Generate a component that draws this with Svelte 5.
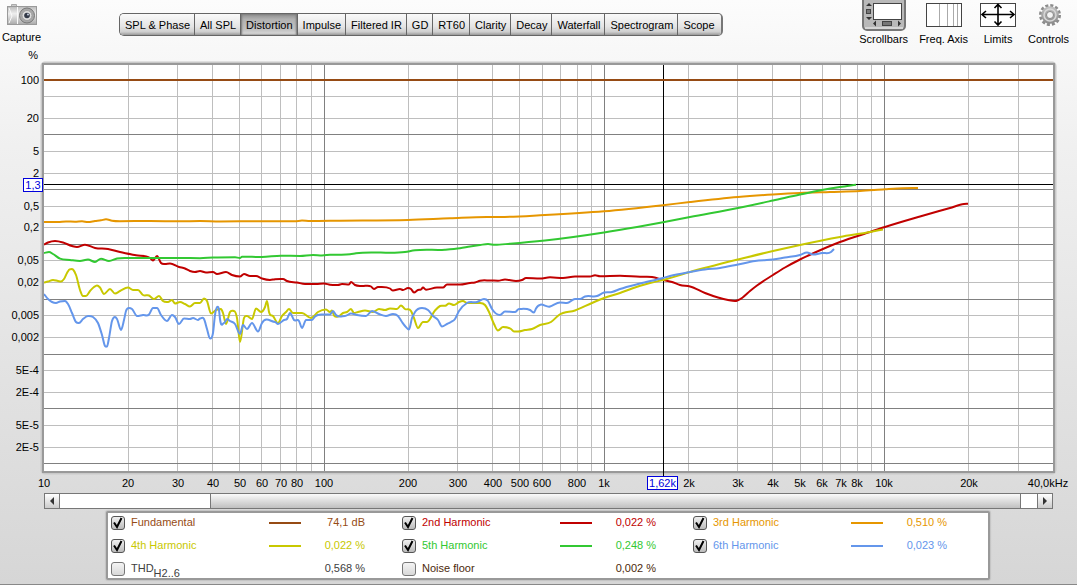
<script lang="ts">
type Point = [number, number];

const tabs = [
	"SPL & Phase", "All SPL", "Distortion", "Impulse", "Filtered IR", "GD",
	"RT60", "Clarity", "Decay", "Waterfall", "Spectrogram", "Scope",
];
let activeTab = $state("Distortion");
let scrollbars = $state(true);

// chart geometry
const left = 44;
const top = 19;
const plotHeight = 406;
const y100 = 34;
const decade = 54.8;

let width = $state(1077);
const plotWidth = $derived(Math.max(width - 68, 100));

const freqPos = (f: number) => left + (Math.log10(f / 10) / Math.log10(4000)) * plotWidth;
const percentPos = (v: number) => y100 + (2 - Math.log10(v)) * decade;
const crisp = (n: number) => Math.floor(n) + 0.5;

const freqLines = [10, 100, 1000, 10000]
	.flatMap((base) => [1, 2, 3, 4, 5, 6, 7, 8, 9].map((m) => ({ f: base * m, major: m === 1 })))
	.filter((l) => l.f > 10 && l.f < 40000);

const percentLines = [1, 0, -1, -2, -3, -4, -5]
	.flatMap((e) => [1, 2, 5].map((m) => ({ v: m * 10 ** e, major: m === 1 })));

const freqLabels = [
	{ f: 10, text: "10" }, { f: 20, text: "20" }, { f: 30, text: "30" }, { f: 40, text: "40" },
	{ f: 50, text: "50" }, { f: 60, text: "60" }, { f: 70, text: "70" }, { f: 80, text: "80" },
	{ f: 100, text: "100" }, { f: 200, text: "200" }, { f: 300, text: "300" }, { f: 400, text: "400" },
	{ f: 500, text: "500" }, { f: 600, text: "600" }, { f: 800, text: "800" }, { f: 1000, text: "1k" },
	{ f: 2000, text: "2k" }, { f: 3000, text: "3k" }, { f: 4000, text: "4k" }, { f: 5000, text: "5k" },
	{ f: 6000, text: "6k" }, { f: 7000, text: "7k" }, { f: 8000, text: "8k" }, { f: 10000, text: "10k" },
	{ f: 20000, text: "20k" }, { f: 38500, text: "40,0kHz" },
];

const percentLabels = [
	{ v: 100, text: "100" }, { v: 20, text: "20" }, { v: 5, text: "5" }, { v: 2, text: "2" },
	{ v: 0.5, text: "0,5" }, { v: 0.2, text: "0,2" }, { v: 0.05, text: "0,05" }, { v: 0.02, text: "0,02" },
	{ v: 0.005, text: "0,005" }, { v: 0.002, text: "0,002" }, { v: 5e-4, text: "5E-4" },
	{ v: 2e-4, text: "2E-4" }, { v: 5e-5, text: "5E-5" }, { v: 2e-5, text: "2E-5" },
];

const cursorX = $derived(crisp(freqPos(1625)));
const cursorY = 138.5;

// x runs over 44..1053, y over 65..471
const curves: Record<string, Point[]> = {
	third: [[44,222],[58,222],[66,221.5],[75,221.7],[82,221.3],[88,222],[95,221],[101,220.3],[106,219.3],[112,220.7],[120,221.2],[150,221],[180,221.3],[200,221],[220,221.5],[260,221.2],[295,221.3],[302,220.5],[310,221],[340,220.7],[408,220],[450,218.3],[487,217],[500,217],[545,215],[604,211.3],[663,205.2],[690,202],[738,197],[773,194.5],[800,193],[830,192],[860,191],[885,189.3],[903,188.3],[918,188]],
	fifth: [[44,253],[49,252],[53,254],[60,258.7],[70,260],[80,261],[88,259.5],[95,262],[101,258.7],[109,261],[117,258.5],[130,258],[150,258],[180,258],[200,258.2],[213,257.5],[235,257.2],[240,258],[242,256.7],[262,257],[281,255.7],[300,256],[313,255],[322,255.5],[330,254.8],[350,254.3],[356,253.3],[405,252],[415,250.3],[445,249.7],[460,248.3],[470,246.5],[480,245],[488,244],[495,244.8],[510,243.7],[545,240.5],[604,232.5],[637,227],[663,222.3],[690,217],[738,208],[773,200.5],[800,194.5],[822,190],[840,187],[856,184.7]],
	second: [[44,244.5],[48,242.5],[55,241],[63,242.5],[72,246],[77,247],[85,244.7],[95,248],[108,249],[120,252],[136,255.3],[150,258],[153,260.5],[157,256],[161,263],[165,264],[170,263.5],[179,267],[185,268.5],[190,271],[195,272],[200,271],[206,272.5],[213,272],[217,274],[226,272],[232,275],[240,276.5],[244,274],[250,276],[256,276],[262,278.5],[270,280],[275,279.2],[283,279],[287,281],[297,282.5],[305,284],[316,284],[324,283.5],[330,284.7],[338,285],[342,284],[349,284.5],[351,282],[355,285],[362,286],[371,286.5],[374,289],[378,287],[390,288.5],[393,290.5],[400,289],[403,290],[408,288],[411,289],[414,292.5],[418,290],[421,289.5],[423,287.5],[426,289.7],[437,287.5],[443,287.5],[447,284.5],[460,284.5],[470,283],[475,282.5],[480,280.7],[490,280.5],[498,280.7],[505,279.5],[516,281],[522,280],[526,278],[540,278.5],[550,277.3],[563,278],[575,276.5],[590,276.5],[595,275.3],[600,276.3],[620,275.7],[640,276.8],[652,277],[663,280],[672,282],[680,285],[690,286.5],[705,293],[718,297.5],[728,300],[735,301],[742,298],[750,291],[757,285.5],[773,275],[785,267.5],[800,259.5],[815,252.5],[840,242],[870,232],[885,227],[920,216.5],[950,208],[964,204],[968,203.8]],
	fourth: [[44,282.5],[48,281.5],[53,280],[58,281],[61,281.5],[64,279],[67,273],[70,269.3],[73,269.5],[76,275],[80,290],[83,296],[86,296],[90,291],[94,287],[97,285.5],[100,287.5],[104,294],[110,289],[115,293.5],[120,291],[128,287.5],[133,290],[138,290],[143,295],[149,295.5],[154,299],[159,296],[163,301],[168,302],[172,300],[175,303.5],[180,302],[185,304],[190,306.5],[195,303],[200,303],[204,298.5],[207,301],[211,313.5],[216,310],[221,309],[223,313],[226,324],[230,312],[234,311],[237,318],[240,342],[244,318],[247,316],[252,319],[256,308.5],[261,312],[265,307],[267,301],[269,312],[273,316],[278,323],[282,316],[286,312],[289,309],[293,313],[302,313],[311,318],[318,312],[326,309.5],[330,312],[332,310.5],[334,315.5],[338,316.5],[343,313],[347,312],[351,309],[354,313],[358,312],[365,310.5],[373,312],[379,309],[385,310],[390,308.5],[397,309],[401,305.5],[405,309],[411,311],[414,318],[418,328],[423,322],[427,322],[435,310.5],[440,306],[446,305.5],[449,303.5],[454,305],[459,302],[463,301],[467,303],[480,303],[485,305],[489,312],[494,324],[498,330.5],[503,327],[511,329],[514,331.5],[518,331.5],[525,330],[532,329],[540,325],[551,322],[559,315],[575,310.5],[592,303],[604,298],[620,293],[632,288.5],[650,283],[663,280],[690,272],[738,259.5],[773,251],[800,245],[840,237],[870,232],[883,229.5]],
	sixth: [[44,294],[48,299],[52,302],[56,303],[60,301.5],[65,301],[68,304],[72,313],[76,322],[79,323],[83,319],[88,316],[93,317],[98,323],[102,335],[105,346],[107,346.5],[109,338],[112,321],[115,317],[117,319],[121,330],[124,320],[126,311],[129,308],[132,309],[137,316],[143,315],[149,314.5],[153,308],[157,308],[161,315],[167,321],[172,315],[175,317],[179,324],[184,318.5],[190,319],[193,318],[198,320],[200,318.5],[204,319],[207,329],[210,338.5],[213,333],[215,315],[217,307],[219,310],[220,319],[224,323],[227,319],[230,321],[235,324],[240,334],[243,325],[247,329],[252,323],[258,331.5],[262,323],[275,322],[278,324],[284,320],[287,319],[290,313],[294,320],[299,321],[302,328],[306,320],[312,320],[315,316.5],[324,314.5],[330,314.5],[333,311],[336,315],[345,316],[351,313.5],[357,315],[366,316],[372,311],[379,314],[386,316],[393,314],[398,316],[402,322],[405,326],[409,329.5],[412,318],[415,312],[422,308],[428,310],[433,316],[438,320],[442,326.5],[447,324],[451,322],[455,319],[459,311],[467,303],[477,302],[484,299],[488,301],[492,309],[500,315],[505,311.5],[515,312],[519,309],[530,310],[534,312.5],[536,308.5],[550,306.5],[560,302.5],[567,303],[575,299],[580,299],[585,296.5],[597,296],[604,292.5],[612,292],[620,289],[640,283.5],[663,278],[670,276],[690,272],[705,269.5],[720,268],[738,264.5],[755,261],[773,259.5],[785,257.5],[800,255],[807,252.5],[813,254.5],[822,253],[831,252],[834,249]],
};

function slope(points: Point[], i: number) {
	const seg = (a: Point, b: Point) => (b[1] - a[1]) / (b[0] - a[0]);
	if (i === 0) return seg(points[0], points[1]);
	if (i === points.length - 1) return seg(points[i - 1], points[i]);
	const before = points[i][0] - points[i - 1][0];
	const after = points[i + 1][0] - points[i][0];
	const s0 = seg(points[i - 1], points[i]);
	const s1 = seg(points[i], points[i + 1]);
	// flat at peaks so the curve never overshoots them
	if (s0 * s1 <= 0) return 0;
	return (s0 * after + s1 * before) / (before + after);
}

function smooth(points: Point[]) {
	let d = `M${points[0]}`;
	for (let i = 0; i < points.length - 1; i++) {
		const [x0, y0] = points[i];
		const [x1, y1] = points[i + 1];
		const t = (x1 - x0) / 3;
		d += `C${x0 + t},${y0 + slope(points, i) * t} ${x1 - t},${y1 - slope(points, i + 1) * t} ${x1},${y1}`;
	}
	return d;
}

let traces = $state([
	{ id: "fundamental", name: "Fundamental", sub: "", value: "74,1 dB", color: "#964b14", line: true, on: true },
	{ id: "second", name: "2nd Harmonic", sub: "", value: "0,022 %", color: "#c00000", line: true, on: true },
	{ id: "third", name: "3rd Harmonic", sub: "", value: "0,510 %", color: "#e69600", line: true, on: true },
	{ id: "fourth", name: "4th Harmonic", sub: "", value: "0,022 %", color: "#c8c800", line: true, on: true },
	{ id: "fifth", name: "5th Harmonic", sub: "", value: "0,248 %", color: "#32c832", line: true, on: true },
	{ id: "sixth", name: "6th Harmonic", sub: "", value: "0,023 %", color: "#6496eb", line: true, on: true },
	{ id: "thd", name: "THD", sub: "H2..6", value: "0,568 %", color: "#404040", line: false, on: false },
	{ id: "noise", name: "Noise floor", sub: "", value: "0,002 %", color: "#4b280a", line: false, on: false },
]);
</script>

<div class="page">
	<header>
		<button class="tool capture">
			<svg width="32" height="28" viewBox="0 0 32 28">
				<defs>
					<linearGradient id="body" x1="0" y1="0" x2="0" y2="1">
						<stop offset="0" stop-color="#bbb" />
						<stop offset="0.4" stop-color="#eee" />
						<stop offset="1" stop-color="#aaa" />
					</linearGradient>
				</defs>
				<path d="M5.500 6V4.500h5V6" fill="#ccc" stroke="#aaa" />
				<rect x="1.500" y="6.500" width="29" height="18" fill="url(#body)" stroke="#9a9a9a" />
				<path d="M3 8l3 8-3 7M11.500 7v17" fill="none" stroke="#fafafa" />
				<circle cx="21" cy="15.500" r="7.500" fill="#a8a8a8" stroke="#777" />
				<circle cx="21" cy="15.500" r="5" fill="#ddd" stroke="#a0a0a0" />
				<circle cx="21" cy="15.500" r="2.800" fill="#333a48" />
				<circle cx="22" cy="14.500" r="1" fill="#c8d0e0" />
			</svg>
			<span>Capture</span>
		</button>

		<nav class="tabs">
			{#each tabs as tab}
				<button class:active={tab === activeTab} onclick={() => (activeTab = tab)}>{tab}</button>
			{/each}
		</nav>

		<div class="tools">
			<button class="tool" aria-pressed={scrollbars} onclick={() => (scrollbars = !scrollbars)}>
				<svg width="44" height="31" viewBox="0 0 44 31">
					<rect x="1" y="-3" width="42" height="33" rx="4" fill="#b9b9b9" stroke="#777" stroke-width="2" />
					<path d="M3 28h38" stroke="#d6d6d6" stroke-width="2" />
					<rect x="11.500" y="3.500" width="28" height="16" fill="#fff" stroke="#444" />
					<path d="M4 6l3-3 3 3zM4 17h6l-3 3zM14 20.500v6l-3-3zM36 20.500v6l3-3z" fill="#333" />
					<rect x="4.500" y="9.500" width="4" height="4" fill="#777" stroke="#444" />
					<rect x="20.500" y="21.500" width="9" height="4" fill="#777" stroke="#444" />
				</svg>
				<span>Scrollbars</span>
			</button>
			<button class="tool">
				<svg width="38" height="31" viewBox="0 0 38 31">
					<rect x="1.500" y="3.500" width="35" height="23" fill="#fff" stroke="#444" />
					<path d="M14.500 4v22M22.500 4v22M28.500 4v22M32.500 4v22" stroke="#aaa" />
				</svg>
				<span>Freq. Axis</span>
			</button>
			<button class="tool">
				<svg width="38" height="31" viewBox="0 0 38 31">
					<rect x="1.500" y="3.500" width="35" height="23" fill="#fff" stroke="#444" />
					<path d="M3 14.500h32M19 5v20M7 11l-4 3.500 4 3.500M31 11l4 3.500-4 3.500M15.500 8L19 4.500 22.500 8M15.500 21.500L19 25l3.500-3.500" fill="none" stroke="#000" stroke-width="1.600" />
				</svg>
				<span>Limits</span>
			</button>
			<button class="tool">
				<svg width="26" height="31" viewBox="0 0 26 31">
					<defs>
						<linearGradient id="gear" x1="0" y1="0" x2="0" y2="1">
							<stop offset="0" stop-color="#c4c4c4" />
							<stop offset="1" stop-color="#8a8a8a" />
						</linearGradient>
					</defs>
					<circle cx="14" cy="15" r="9.500" fill="none" stroke="#8c8c8c" stroke-width="3" stroke-dasharray="3 1.974" />
					<circle cx="14" cy="15" r="8.800" fill="url(#gear)" />
					<circle cx="14" cy="15" r="6" fill="none" stroke="#d8d8d8" stroke-width="1.500" />
					<circle cx="14" cy="15" r="3.500" fill="#f4f4f4" stroke="#888" />
				</svg>
				<span>Controls</span>
			</button>
		</div>
	</header>

	<div class="chart" bind:clientWidth={width}>
		<svg {width} height="446">
			<rect x={left - 2} y={top - 2} width={plotWidth + 4} height={plotHeight + 4} rx="3" fill="none" stroke="#c9c9c9" stroke-width="3" />
			<rect x={left - 1} y={top - 1} width={plotWidth + 2} height={plotHeight + 2} fill="#fff" stroke="#999" stroke-width="2" />

			{#each [false, true] as major}
				<g class={major ? "major" : "minor"}>
					{#each freqLines.filter((l) => l.major === major) as l}
						<path d="M{crisp(freqPos(l.f))} {top}v{plotHeight}" />
					{/each}
					{#each percentLines.filter((l) => l.major === major && percentPos(l.v) < top + plotHeight) as l}
						<path d="M{left} {crisp(percentPos(l.v))}h{plotWidth}" />
					{/each}
				</g>
			{/each}

			<path d="M{left} {cursorY}h{plotWidth}M{cursorX} {top}v411" stroke="#000" />

			<svg x={left} y={top} width={plotWidth} height={plotHeight} viewBox="44 65 1009 406" preserveAspectRatio="none">
				{#each traces.filter((t) => t.line && t.on) as t (t.id)}
					<path
						class="trace"
						d={curves[t.id] ? smooth(curves[t.id]) : "M44 80H1053"}
						stroke={t.color}
					/>
				{/each}
			</svg>

			<text x="38" y="13" text-anchor="end">%</text>
			{#each percentLabels as l}
				<text x="39" y={Math.floor(percentPos(l.v)) + 4} text-anchor="end">{l.text}</text>
			{/each}
			{#each freqLabels as l}
				<text x={Math.round(freqPos(l.f))} y="441" text-anchor="middle">{l.text}</text>
			{/each}

			<g class="readout">
				<rect x="23.500" y="132.500" width="19" height="13" />
				<text x="33" y="143" text-anchor="middle">1,3</text>
				<rect x={cursorX - 16} y="430.500" width="30" height="13" />
				<text x={cursorX - 1} y="441" text-anchor="middle">1,62k</text>
			</g>
		</svg>
	</div>

	{#if scrollbars}
		<div class="scrollbar">
			<button aria-label="Scroll left"><svg width="14" height="14"><path d="M9 3v8L5 7z" fill="#333" /></svg></button>
			<div class="track"><div class="thumb"></div></div>
			<button aria-label="Scroll right"><svg width="14" height="14"><path d="M5 3v8l4-4z" fill="#333" /></svg></button>
		</div>
	{/if}

	<div class="legend">
		{#each traces as t (t.id)}
			<div class="entry" style:color={t.color}>
				<input type="checkbox" id={t.id} bind:checked={t.on} />
				<label for={t.id}>{t.name}{#if t.sub}<sub>{t.sub}</sub>{/if}</label>
				<span class="swatch" class:hidden={!t.line}></span>
				<span class="value">{t.value}</span>
			</div>
		{/each}
	</div>
</div>

<style>
	:global(body) {
		background: #d6d6d6;
	}

	.page {
		box-sizing: border-box;
		min-height: 100vh;
		border-bottom: 1px solid #888;
		background: linear-gradient(#fcfcfc, #f0f0f0 25%, #d6d6d6);
		font-family: "Liberation Sans", Arial, sans-serif;
		font-size: 11px;
		color: #000;
	}

	header {
		display: flex;
		align-items: flex-start;
		height: 46px;
		padding-right: 8px;
	}

	button {
		padding: 0;
		border: none;
		background: none;
		font: inherit;
		color: inherit;
	}

	.tool {
		display: flex;
		flex-direction: column;
		align-items: center;
		gap: 2px;
		line-height: 12px;
	}

	.tool svg {
		display: block;
	}

	.capture {
		width: 43px;
		gap: 3px;
	}

	.tools {
		display: flex;
		gap: 11px;
		margin-left: auto;
	}

	.tabs {
		display: flex;
		margin: 13px 0 0 76px;
		border: 1px solid #666;
		border-right: 2px solid #777;
		border-radius: 5px;
		overflow: hidden;
	}

	.tabs button {
		height: 21px;
		padding: 0 4px 0 5px;
		border-right: 1px solid #666;
		background: linear-gradient(#fafafa, #e4e4e4 60%, #cfcfcf 85%, #999);
		white-space: nowrap;
	}

	.tabs button:last-child {
		padding-right: 6px;
		border-right: none;
	}

	.tabs .active {
		background: linear-gradient(#8c8c8c, #b2b2b2 25%, #c2c2c2 75%, #dedede);
		box-shadow: inset 1px 0 2px #777, inset -1px 0 2px #777;
	}

	.chart svg {
		display: block;
	}

	.minor path {
		stroke: #bebebe;
	}

	.major path {
		stroke: #808080;
	}

	.trace {
		fill: none;
		stroke-width: 2;
		stroke-linejoin: round;
		vector-effect: non-scaling-stroke;
	}

	.readout rect {
		fill: #fff;
		stroke: #0000dc;
	}

	.readout text {
		fill: #0000dc;
	}

	.scrollbar {
		display: flex;
		box-sizing: border-box;
		height: 16px;
		margin: 1px 24px 2px 44px;
		border: 1px solid #777;
		background: #fff;
	}

	.scrollbar button {
		width: 14px;
		background: linear-gradient(#fff, #ccc);
	}

	.scrollbar button svg {
		display: block;
	}

	.track {
		flex: 1;
		border: solid #777;
		border-width: 0 1px;
	}

	.thumb {
		box-sizing: border-box;
		width: 83%;
		height: 100%;
		margin-left: 15.4%;
		border: solid #777;
		border-width: 0 1px;
		background: linear-gradient(#fafafa, #c0c0c0);
	}

	.legend {
		display: grid;
		grid-template-columns: repeat(3, 1fr);
		grid-auto-rows: 19px;
		row-gap: 4px;
		margin: 0 87px 0 106px;
		padding-left: 3px;
		padding-right: 4px;
		border: 2px solid #999;
		border-radius: 2px;
		background: #fff;
		box-shadow: 0 0 1px 1px #c4c4c4;
	}

	.entry {
		display: grid;
		grid-template-columns: 14px 144px 32px 64px;
		align-items: center;
		line-height: 17px;
	}

	.entry label {
		padding-left: 6px;
	}

	.entry sub {
		position: relative;
		top: 5px;
		font-size: 11px;
		vertical-align: baseline;
		line-height: 0;
	}

	.swatch {
		height: 2px;
		background: currentColor;
	}

	.swatch.hidden {
		visibility: hidden;
	}

	.value {
		text-align: right;
	}

	input {
		appearance: none;
		width: 14px;
		height: 14px;
		margin: 0;
		border: 1px solid #777;
		border-radius: 3px;
		background: linear-gradient(#f4f4f4, #d8d8d8);
	}

	input:checked {
		border-color: #555;
		background:
			url("data:image/svg+xml,%3Csvg xmlns='http://www.w3.org/2000/svg' width='12' height='12'%3E%3Cpath d='M2 5.500l3 4.500L9.500 1' fill='none' stroke='black' stroke-width='2'/%3E%3C/svg%3E") no-repeat,
			linear-gradient(#f0f0f0, #bbb);
	}
</style>
